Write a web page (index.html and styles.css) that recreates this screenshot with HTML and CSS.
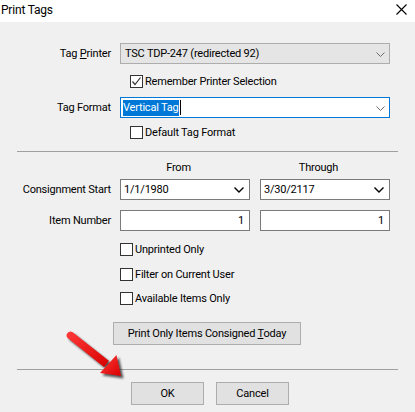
FILE: index.html
```html
<!DOCTYPE html>
<html>
<head>
<meta charset="utf-8">
<link rel="stylesheet" href="styles.css">
</head>
<body>
<div class="window">
  <div class="titlebar">
    <span class="title">Print Tags</span>
    <svg class="close" width="11" height="11" viewBox="0 0 11 11"><path d="M0.5 0.5 L10.5 10.5 M10.5 0.5 L0.5 10.5" stroke="#000" stroke-width="1.1" fill="none"/></svg>
  </div>
  <div class="content">
    <div class="row r-printer">
      <label class="lbl">Tag <u>P</u>rinter</label>
      <div class="combo combo-disabled wide">
        <span class="val">TSC TDP-247 (redirected 92)</span>
        <svg class="chev" width="9" height="5" viewBox="0 0 9 5"><path d="M0.5 0.5 L4.5 4.5 L8.5 0.5" stroke="#6d6d6d" stroke-width="1" fill="none"/></svg>
      </div>
    </div>
    <div class="check-row indent1 r-remember">
      <span class="box"><svg width="11" height="11" viewBox="0 0 11 11"><path d="M1.5 5.5 L4 8.5 L9.5 1.5" stroke="#333" stroke-width="1.2" fill="none"/></svg></span>
      <span class="ctext">Remember Printer Selection</span>
    </div>
    <div class="row r-format">
      <label class="lbl">Tag Format</label>
      <div class="combo combo-focus wide">
        <span class="val"><span class="sel">Vertical Tag</span><span class="caret"></span></span>
        <svg class="chev" width="9" height="5" viewBox="0 0 9 5"><path d="M0.5 0.5 L4.5 4.5 L8.5 0.5" stroke="#6d6d6d" stroke-width="1" fill="none"/></svg>
      </div>
    </div>
    <div class="check-row indent1 r-default">
      <span class="box"></span>
      <span class="ctext">Default Tag Format</span>
    </div>
    <div class="sep sep1"></div>
    <div class="row r-head">
      <span class="lbl"></span>
      <div class="pair">
        <span class="head">From</span>
        <span class="head">Through</span>
      </div>
    </div>
    <div class="row r-dates">
      <label class="lbl">Consignment Start</label>
      <div class="pair">
        <div class="combo combo-date">
          <span class="val">1/1/1980</span>
          <svg class="chev dark" width="10" height="6" viewBox="0 0 10 6"><path d="M0.5 0.5 L5 5 L9.5 0.5" stroke="#000" stroke-width="1.4" fill="none"/></svg>
        </div>
        <div class="combo combo-date">
          <span class="val">3/30/2117</span>
          <svg class="chev dark" width="10" height="6" viewBox="0 0 10 6"><path d="M0.5 0.5 L5 5 L9.5 0.5" stroke="#000" stroke-width="1.4" fill="none"/></svg>
        </div>
      </div>
    </div>
    <div class="row r-items">
      <label class="lbl">Item Number</label>
      <div class="pair">
        <div class="num">1</div>
        <div class="num">1</div>
      </div>
    </div>
    <div class="check-row indent0 r-unprinted">
      <span class="box"></span>
      <span class="ctext">Unprinted Only</span>
    </div>
    <div class="check-row indent0 r-filter">
      <span class="box"></span>
      <span class="ctext">Filter on Current User</span>
    </div>
    <div class="check-row indent0 r-avail">
      <span class="box"></span>
      <span class="ctext">Available Items Only</span>
    </div>
    <div class="btn-row r-today">
      <button class="btn today">Print Only Items Consigned <u>T</u>oday</button>
    </div>
    <div class="sep sep2"></div>
    <div class="btn-row r-ok">
      <button class="btn okc">OK</button>
      <button class="btn okc">Cancel</button>
    </div>
  </div>
  <svg class="arrow" width="80" height="70" viewBox="0 0 80 70">
    <defs>
      <filter id="sh" x="-30%" y="-30%" width="160%" height="160%">
        <feGaussianBlur stdDeviation="1.3"/>
      </filter>
      <linearGradient id="rg" x1="0" y1="0" x2="1" y2="1">
        <stop offset="0" stop-color="#ff3b3b"/>
        <stop offset="1" stop-color="#d80000"/>
      </linearGradient>
    </defs>
    <g transform="translate(2.5,2.5)" filter="url(#sh)" fill="#202020" opacity="0.75">
      <path d="M7.6 15 L44 44 L48.8 37.8 L12.4 9 A3.9 3.9 0 0 0 7.6 15 Z"/>
      <path d="M40 50 L61 53 L56.5 32 Z"/>
    </g>
    <g fill="url(#rg)">
      <path d="M7.6 15 L44 44 L48.8 37.8 L12.4 9 A3.9 3.9 0 0 0 7.6 15 Z"/>
      <path d="M40 50 L61 53 L56.5 32 Z"/>
    </g>
  </svg>
</div>
</body>
</html>
```
FILE: styles.css
```css
* { box-sizing: border-box; }
html, body { margin: 0; padding: 0; }
body {
  font-family: Roboto, "Noto Sans", sans-serif;
  font-size: 11px;
  letter-spacing: -0.2px;
  color: #000;
  background: #f0f0f0;
}
.window {
  position: relative;
  width: 415px;
  height: 412px;
  background: #f0f0f0;
  overflow: hidden;
}
.titlebar {
  height: 22px;
  background: #fff;
  display: flex;
  align-items: center;
  justify-content: space-between;
  padding: 0 8px 2px 1px;
}
.title { font-size: 12px; }
.close { display: block; margin-top: -1px; }

.content {
  padding-top: 21px;
  display: flex;
  flex-direction: column;
}
.row {
  display: grid;
  grid-template-columns: 120px 270px;
  align-items: center;
}
.lbl {
  text-align: right;
  padding-right: 9px;
  white-space: nowrap;
}
.combo {
  height: 21px;
  display: flex;
  align-items: center;
  justify-content: space-between;
  padding: 0 4px 0 3px;
  border: 1px solid #adadad;
  background: #fff;
  white-space: nowrap;
}
.combo-disabled { background: #e5e5e5; padding-left: 4px; }
.combo-focus { border-color: #0078d7; padding-left: 2px; }
.combo-date { border-color: #7a7a7a; padding-right: 5px; }
.chev { display: block; margin-top: 1px; }
.sel {
  background: #0078d7;
  color: #fff;
  padding: 1px 0 2px;
}
.caret {
  display: inline-block;
  width: 1px;
  height: 15px;
  background: #000;
  vertical-align: middle;
  margin-left: 1px;
}
.val { display: flex; align-items: center; }

.check-row {
  display: flex;
  align-items: center;
  height: 13px;
  gap: 2px;
}
.indent1 { padding-left: 130px; }
.indent0 { padding-left: 120px; }
.box {
  width: 13px;
  height: 13px;
  border: 1px solid #333;
  background: #fff;
  flex: none;
  display: flex;
  align-items: center;
  justify-content: center;
}
.box svg { display: block; }
.ctext { white-space: nowrap; }

.r-remember { margin-top: 11px; }
.r-format { margin-top: 9px; }
.r-default { margin-top: 8px; }
.sep {
  height: 1px;
  background: #a0a0a0;
  margin-left: 17px;
  width: 381px;
}
.sep1 { margin-top: 12px; }
.r-head { margin-top: 8px; height: 15px; }
.pair {
  display: grid;
  grid-template-columns: 130px 130px;
  column-gap: 10px;
}
.head { text-align: center; padding-right: 13px; }
.r-dates { margin-top: 4px; }
.r-items { margin-top: 10px; }
.num {
  height: 21px;
  border: 1px solid #7a7a7a;
  background: #fff;
  text-align: right;
  padding-right: 5px;
  line-height: 19px;
}
.r-unprinted { margin-top: 12px; }
.r-filter { margin-top: 12px; }
.r-avail { margin-top: 11px; }

.btn-row { display: flex; }
.btn {
  font-family: inherit;
  font-size: 11px;
  letter-spacing: -0.2px;
  color: #000;
  background: #e1e1e1;
  border: 1px solid #adadad;
  border-radius: 0;
  padding: 0;
  height: 23px;
  margin: 0;
  white-space: nowrap;
}
.r-today { margin-top: 17px; padding-left: 113px; }
.today { width: 188px; }
.sep2 { margin-top: 24px; }
.r-ok { margin-top: 12px; padding-left: 131px; gap: 12px; }
.okc { width: 73px; }

.arrow {
  position: absolute;
  left: 60px;
  top: 323px;
}
```
